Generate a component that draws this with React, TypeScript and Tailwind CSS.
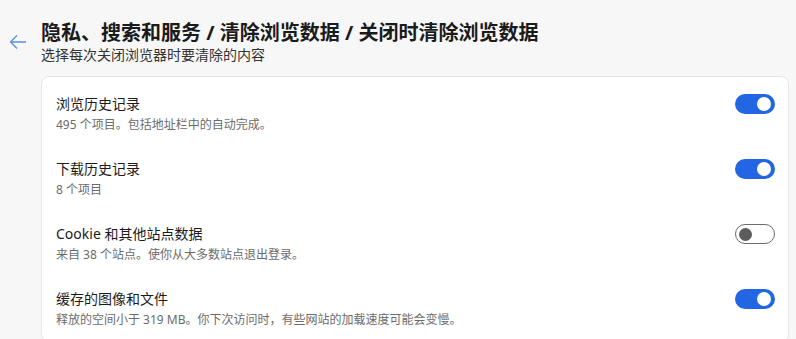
import React from "react";

const rows = [
  { title: "浏览历史记录", sub: "495 个项目。包括地址栏中的自动完成。", on: true },
  { title: "下载历史记录", sub: "8 个项目", on: true },
  { title: "Cookie 和其他站点数据", sub: "来自 38 个站点。使你从大多数站点退出登录。", on: false },
  { title: "缓存的图像和文件", sub: "释放的空间小于 319 MB。你下次访问时，有些网站的加载速度可能会变慢。", on: true },
];

function Toggle({ on }: { on: boolean }) {
  return on ? (
    <div className="flex h-[20px] w-[40px] shrink-0 items-center justify-end rounded-full bg-[#2366e4] pr-[4px]">
      <div className="h-[14px] w-[14px] rounded-full bg-white" />
    </div>
  ) : (
    <div className="flex h-[20px] w-[40px] shrink-0 items-center rounded-full border border-[#6b6b6b] bg-white pl-[3px]">
      <div className="h-[13px] w-[13px] rounded-full bg-[#5c5c5c]" />
    </div>
  );
}

export default function App() {
  return (
    <div
      className="h-[339px] w-[796px] overflow-hidden bg-[#f7f7f7] text-[#1b1b1b]"
      style={{ fontFamily: '"Noto Sans", "Noto Sans CJK SC", sans-serif' }}
    >
      <div className="flex pt-[20px]">
        <div className="w-[41px] shrink-0 pl-[9px] pt-[14px]">
          <svg width="18" height="16" viewBox="0 0 18 16" fill="none">
            <path d="M17 8H2M8 1.5L1.5 8L8 14.5" stroke="#5a8fe6" strokeWidth="1.3" />
          </svg>
        </div>
        <div className="min-w-0 flex-1">
          <div className="text-[20px] font-bold leading-[26px]">
            隐私、搜索和服务 / 清除浏览数据 / 关闭时清除浏览数据
          </div>
          <div className="text-[14px] leading-[18px] text-[#333]">选择每次关闭浏览器时要清除的内容</div>
        </div>
      </div>
      <div className="ml-[41px] mr-[7px] mt-[12px] rounded-[8px] border border-[#e6e6e6] bg-white pt-[4px]">
        {rows.map((r) => (
          <div key={r.title} className="flex items-start pl-[14px] pr-[13px] py-[13px]">
            <div className="flex-1">
              <div className="text-[14px] leading-[20px] text-[#1b1b1b]">{r.title}</div>
              <div className="mt-[3px] text-[12px] leading-[16px] text-[#6b6b6b]">{r.sub}</div>
            </div>
            <Toggle on={r.on} />
          </div>
        ))}
      </div>
    </div>
  );
}
